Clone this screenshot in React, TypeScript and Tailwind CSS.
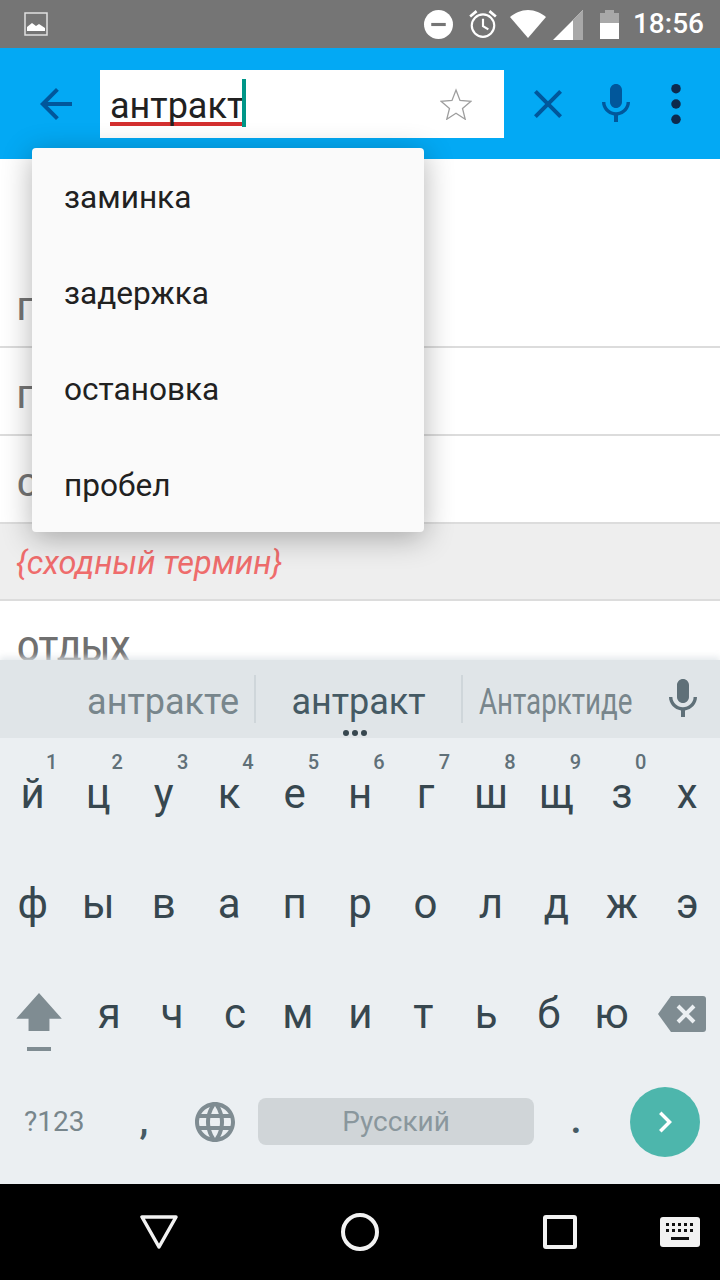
import React from "react";

const row1 = [
  ["й", "1"],
  ["ц", "2"],
  ["у", "3"],
  ["к", "4"],
  ["е", "5"],
  ["н", "6"],
  ["г", "7"],
  ["ш", "8"],
  ["щ", "9"],
  ["з", "0"],
  ["х", ""],
];
const row2 = ["ф", "ы", "в", "а", "п", "р", "о", "л", "д", "ж", "э"];
const row3 = ["я", "ч", "с", "м", "и", "т", "ь", "б", "ю"];
const suggestions = ["заминка", "задержка", "остановка", "пробел"];

const MicIcon = ({ className }: { className: string }) => (
  <svg viewBox="0 0 24 24" className={className} fill="currentColor">
    <path d="M12 14c1.66 0 2.99-1.34 2.99-3L15 5c0-1.66-1.34-3-3-3S9 3.34 9 5v6c0 1.66 1.34 3 3 3zm5.3-3c0 3-2.54 5.1-5.3 5.1S6.7 14 6.7 11H5c0 3.41 2.72 6.23 6 6.72V21h2v-3.28c3.28-.48 6-3.3 6-6.72h-1.7z" />
  </svg>
);

const StatusBar = () => (
  <div className="h-[48px] shrink-0 bg-[#757575] flex items-center pl-[24px] pr-[16px] text-white">
    <svg viewBox="0 0 24 24" className="w-[24px] h-[24px]">
      <rect x="1" y="1" width="22" height="22" fill="none" stroke="#e0e0e0" strokeWidth="1.5" />
      <path d="M3 19v-4l5-4 4 3 3-2 6 4v3z" fill="#fff" />
    </svg>
    <div className="flex-1" />
    <svg viewBox="0 0 28 28" className="w-[29px] h-[29px] mr-[15px]">
      <circle cx="14" cy="14" r="14" fill="#fff" />
      <rect x="7" y="12.5" width="14" height="3" fill="#757575" />
    </svg>
    <svg viewBox="0 0 28 28" className="w-[30px] h-[30px] mr-[12px]" fill="none" stroke="#fff" strokeWidth="2">
      <circle cx="14" cy="15.5" r="10.5" />
      <path d="M14 9v7l5 3" />
      <path d="M2 7l6-5M26 7l-6-5" strokeWidth="2.5" />
    </svg>
    <svg viewBox="0 0 36 28" className="w-[36px] h-[28px] mr-[7px]">
      <path d="M0 7C5 3 11 0 18 0s13 3 18 7L18 28z" fill="#fff" />
    </svg>
    <svg viewBox="0 0 30 30" className="w-[30px] h-[30px] mr-[17px] mt-[1px]">
      <path d="M0 30L30 0v30z" fill="#fff" />
      <path d="M20 10L30 0v30H20z" fill="#a8a8a8" />
    </svg>
    <svg viewBox="0 0 19 29" className="w-[19px] h-[29px] mr-[14px]">
      <path d="M0 3h5V0h9v3h5v11H0z" fill="#a8a8a8" />
      <rect x="0" y="13" width="19" height="16" fill="#fff" />
    </svg>
    <span className="text-[28px] leading-none font-medium font-['Roboto',sans-serif]">18:56</span>
  </div>
);

const AppBar = () => (
  <div className="h-[111px] shrink-0 bg-[#03a9f4] flex items-start pt-[22px] text-[#01579b]">
    <div className="w-[100px] h-[68px] flex items-center justify-center pl-[12px]">
      <svg viewBox="0 0 24 24" className="w-[48px] h-[48px]" fill="currentColor">
        <path d="M20 11H7.83l5.59-5.59L12 4l-8 8 8 8 1.41-1.41L7.83 13H20v-2z" />
      </svg>
    </div>
    <div className="w-[404px] h-[68px] bg-white flex items-start pl-[10px] pr-[32px]">
      <span className="mt-[24px] pb-[3px] text-[36px] leading-[25px] text-[#212121] font-['Roboto',sans-serif] border-b-[4px] border-[#d32f2f]">
        антракт
      </span>
      <div className="mt-[9px] ml-[-2px] w-[4px] h-[48px] bg-[#009688]" />
      <div className="flex-1" />
      <svg viewBox="0 0 32 32" className="self-center w-[32px] h-[32px]" fill="none" stroke="#9e9e9e" strokeWidth="1.3">
        <path d="M16 2l4 10.5 11 .8-8.5 7.2 2.7 10.7L16 25.2l-9.2 6 2.7-10.7L1 13.3l11-.8z" />
      </svg>
    </div>
    <div className="flex-1 h-[68px] flex items-center">
      <div className="w-[88px] flex justify-center">
        <svg viewBox="0 0 24 24" className="w-[48px] h-[48px]" fill="currentColor">
          <path d="M19 6.41L17.59 5 12 10.59 6.41 5 5 6.41 10.59 12 5 17.59 6.41 19 12 13.41 17.59 19 19 17.59 13.41 12z" />
        </svg>
      </div>
      <div className="w-[48px] flex justify-center">
        <MicIcon className="w-[48px] h-[56px] text-[#01579b]" />
      </div>
      <div className="w-[72px] flex justify-center">
        <svg viewBox="0 0 12 44" className="w-[12px] h-[42px]" fill="#0d2a4d">
          <circle cx="6" cy="6" r="5" />
          <circle cx="6" cy="22" r="5" />
          <circle cx="6" cy="38" r="5" />
        </svg>
      </div>
    </div>
  </div>
);

const ListContent = () => (
  <div className="flex-1 min-h-0 overflow-hidden bg-white font-['Roboto',sans-serif]">
    <div className="h-[189px] flex items-end pb-[19px] pl-[17px] text-[32px] leading-[36px] font-medium text-[#757575] border-b-2 border-[#dcdcdc]">
      <span>Г</span>
    </div>
    <div className="h-[88px] flex items-end pb-[19px] pl-[17px] text-[32px] leading-[36px] font-medium text-[#757575] border-b-2 border-[#dcdcdc]">
      <span>Г</span>
    </div>
    <div className="h-[88px] flex items-end pb-[19px] pl-[17px] text-[32px] leading-[36px] font-medium text-[#757575] border-b-2 border-[#dcdcdc]">
      <span>С</span>
    </div>
    <div className="h-[77px] flex items-center pl-[16px] pt-[4px] bg-[#eeeeee] text-[32.5px] italic text-[#ef6c6c] border-b-2 border-[#dcdcdc]">
      {"{сходный термин}"}
    </div>
    <div className="pt-[27px] pl-[17px] text-[32.5px] leading-[44px] font-medium text-[#707070]">ОТДЫХ</div>
  </div>
);

const SuggestionMenu = () => (
  <div className="absolute left-[32px] top-[148px] w-[392px] bg-[#fafafa] rounded-[4px] shadow-[0_6px_30px_rgba(0,0,0,0.3)] font-['Roboto',sans-serif]">
    {suggestions.map((item) => (
      <div key={item} className="h-[96px] flex items-center pl-[32px] pt-[4px] text-[31.6px] text-[#212121]">
        {item}
      </div>
    ))}
  </div>
);

const CandidateStrip = () => (
  <div className="h-[78px] shrink-0 bg-[#e0e5e8] flex items-center font-['Roboto',sans-serif] shadow-[0_-3px_6px_rgba(224,229,232,0.8)]">
    <div className="w-[256px] h-[48px] flex items-center justify-end pr-[15px] pt-[6px] border-r-2 border-[#cfd6da] text-[36px] text-[#78868c]">
      антракте
    </div>
    <div className="relative w-[207px] h-[48px] flex items-center justify-center pt-[6px] border-r-2 border-[#cfd6da] text-[36px] text-[#455a64]">
      антракт
      <div className="absolute top-[55px] left-[87px] flex gap-[3px]">
        <span className="w-[6px] h-[6px] rounded-full bg-[#37474f]" />
        <span className="w-[6px] h-[6px] rounded-full bg-[#37474f]" />
        <span className="w-[6px] h-[6px] rounded-full bg-[#37474f]" />
      </div>
    </div>
    <div className="w-[196px] h-[48px] flex items-center justify-center pt-[6px] pr-[10px] text-[36px] text-[#78868c] whitespace-nowrap">
      <span className="scale-x-[0.77]">Антарктиде</span>
    </div>
    <MicIcon className="w-[48px] h-[48px] text-[#5f7078] shrink-0" />
  </div>
);

const letterClass = "text-[42px] leading-[48px] text-[#37474f]";

const Keyboard = () => (
  <div className="h-[524px] shrink-0 flex flex-col font-['Roboto',sans-serif]">
    <CandidateStrip />
    <div className="flex-1 bg-[#ebeff2] flex flex-col">
      <div className="h-[111px] grid grid-cols-11 pt-[13px]">
        {row1.map(([letter, digit]) => (
          <div key={letter} className="flex flex-col items-center">
            <span className="h-[19px] w-full pl-[46px] text-[20px] leading-[22px] font-medium text-[#607078]">{digit}</span>
            <span className={letterClass}>{letter}</span>
          </div>
        ))}
      </div>
      <div className="h-[110px] grid grid-cols-11 items-center">
        {row2.map((letter) => (
          <div key={letter} className={"text-center " + letterClass}>
            {letter}
          </div>
        ))}
      </div>
      <div className="h-[110px] flex items-center">
        <div className="w-[78px] flex flex-col items-center">
          <svg viewBox="0 0 48 40" className="w-[48px] h-[38px]" fill="#7f8c92">
            <path d="M24 0l24 27H35v13H13V27H0z" />
          </svg>
          <div className="w-[24px] h-[4px] mt-[16px] mb-[-16px] bg-[#7f8c92]" />
        </div>
        <div className="w-[565px] grid grid-cols-9">
          {row3.map((letter) => (
            <div key={letter} className={"text-center " + letterClass}>
              {letter}
            </div>
          ))}
        </div>
        <div className="w-[77px] flex justify-center">
          <svg viewBox="0 0 48 36" className="w-[48px] h-[36px]">
            <path d="M13 0h32a3 3 0 0 1 3 3v30a3 3 0 0 1-3 3H13L0 18z" fill="#7f8c92" />
            <path d="M20 10l16 16M36 10L20 26" stroke="#ebeff2" strokeWidth="4" />
          </svg>
        </div>
      </div>
      <div className="flex-1 flex items-center pb-[10px] text-[#78868c]">
        <div className="w-[108px] pl-[24px] text-[28px]">?123</div>
        <div className="w-[72px] text-center text-[36px] font-bold leading-none text-[#455a64] pb-[2px]">,</div>
        <div className="w-[70px] mr-[8px] flex justify-center">
          <svg viewBox="0 0 24 24" className="w-[48px] h-[48px]" fill="#7f8c92">
            <path d="M11.99 2C6.47 2 2 6.48 2 12s4.47 10 9.99 10C17.52 22 22 17.52 22 12S17.52 2 11.99 2zm6.93 6h-2.95c-.32-1.25-.78-2.45-1.38-3.56 1.84.63 3.37 1.91 4.33 3.56zM12 4.04c.83 1.2 1.48 2.53 1.91 3.96h-3.82c.43-1.43 1.08-2.76 1.91-3.96zM4.26 14C4.1 13.36 4 12.69 4 12s.1-1.36.26-2h3.38c-.08.66-.14 1.32-.14 2 0 .68.06 1.34.14 2H4.26zm.82 2h2.95c.32 1.25.78 2.45 1.38 3.56-1.84-.63-3.37-1.9-4.33-3.56zm2.95-8H5.08c.96-1.66 2.49-2.93 4.33-3.56C8.81 5.55 8.35 6.75 8.03 8zM12 19.96c-.83-1.2-1.48-2.53-1.91-3.96h3.82c-.43 1.43-1.08 2.76-1.91 3.96zM14.34 14H9.66c-.09-.66-.16-1.32-.16-2 0-.68.07-1.35.16-2h4.68c.09.65.16 1.32.16 2 0 .68-.07 1.34-.16 2zm.25 5.56c.6-1.11 1.06-2.31 1.38-3.56h2.95c-.96 1.65-2.49 2.93-4.33 3.56zM16.36 14c.08-.66.14-1.32.14-2 0-.68-.06-1.34-.14-2h3.38c.16.64.26 1.31.26 2s-.1 1.36-.26 2h-3.38z" />
          </svg>
        </div>
        <div className="w-[276px] h-[47px] bg-[#d0d5d8] rounded-[8px] flex items-center justify-center text-[28px] text-[#8a979d]">
          Русский
        </div>
        <div className="w-[84px] text-center text-[36px] font-bold leading-none text-[#455a64] pb-[2px]">.</div>
        <div className="w-[70px] h-[70px] rounded-full bg-[#4db6ac] flex items-center justify-center ml-[12px]">
          <svg viewBox="0 0 24 24" className="w-[42px] h-[42px]" fill="#fff">
            <path d="M10 6L8.59 7.41 13.17 12l-4.58 4.59L10 18l6-6z" />
          </svg>
        </div>
      </div>
    </div>
  </div>
);

const NavBar = () => (
  <div className="h-[96px] shrink-0 bg-black flex items-center">
    <div className="w-[320px] flex justify-center">
      <svg viewBox="0 0 40 36" className="w-[40px] h-[36px]" fill="none" stroke="#f2f2f2" strokeWidth="3.5" strokeLinejoin="round">
        <path d="M2 3h34L19 33z" />
      </svg>
    </div>
    <div className="w-[80px] flex justify-center">
      <svg viewBox="0 0 40 40" className="w-[40px] h-[40px]" fill="none" stroke="#f2f2f2" strokeWidth="4">
        <circle cx="20" cy="20" r="17" />
      </svg>
    </div>
    <div className="w-[320px] flex items-center pl-[142px]">
      <svg viewBox="0 0 36 36" className="w-[36px] h-[36px]" fill="none" stroke="#f2f2f2" strokeWidth="4">
        <rect x="3" y="3" width="30" height="30" rx="1" />
      </svg>
      <svg viewBox="0 0 40 30" className="w-[40px] h-[30px] ml-[82px]">
        <rect width="40" height="30" rx="3" fill="#f2f2f2" />
        <path d="M6 6h3v3H6zm6 0h3v3h-3zm6 0h3v3h-3zm6 0h3v3h-3zm6 0h3v3h-3zM6 12h3v3H6zm6 0h3v3h-3zm6 0h3v3h-3zm6 0h3v3h-3zm6 0h3v3h-3zM11 20h18v3H11z" fill="#111" />
      </svg>
    </div>
  </div>
);

const App = () => {
  return (
    <main className="relative w-[720px] h-[1280px] overflow-hidden flex flex-col">
      <StatusBar />
      <AppBar />
      <ListContent />
      <Keyboard />
      <NavBar />
      <SuggestionMenu />
    </main>
  );
};

export default App;
